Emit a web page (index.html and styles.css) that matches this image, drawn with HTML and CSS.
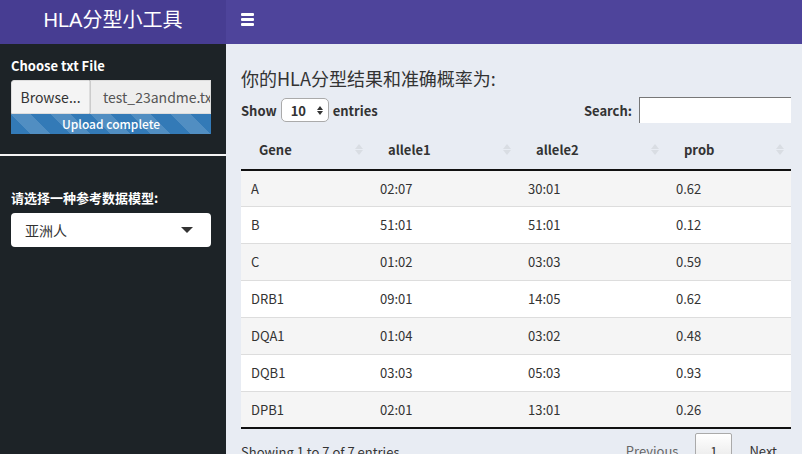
FILE: index.html
```html
<!DOCTYPE html>
<html>
<head>
<meta charset="utf-8">
<link rel="stylesheet" href="styles.css">
</head>
<body>
<div class="app">
  <header class="topbar">
    <div class="logo">HLA分型小工具</div>
    <nav class="navbar">
      <span class="burger"><i></i><i></i><i></i></span>
    </nav>
  </header>
  <div class="body">
    <aside class="sidebar">
      <div class="group">
        <label class="lbl">Choose txt File</label>
        <div class="file">
          <span class="browse">Browse...</span>
          <span class="fname">test_23andme.txt</span>
        </div>
        <div class="progress">Upload complete</div>
      </div>
      <hr class="divider">
      <div class="group group2">
        <label class="lbl">请选择一种参考数据模型:</label>
        <div class="select">
          <span>亚洲人</span>
          <span class="caret"></span>
        </div>
      </div>
    </aside>
    <main class="content">
      <h3 class="title">你的HLA分型结果和准确概率为:</h3>
      <div class="controls">
        <div class="length">Show <span class="lensel">10 <span class="spin"><b class="up"></b><b class="down"></b></span></span> entries</div>
        <div class="search">Search: <span class="sinput"></span></div>
      </div>
      <table class="tbl">
        <thead>
          <tr>
            <th class="c1">Gene<span class="sort"><b class="up"></b><b class="down"></b></span></th>
            <th class="c2">allele1<span class="sort"><b class="up"></b><b class="down"></b></span></th>
            <th class="c3">allele2<span class="sort"><b class="up"></b><b class="down"></b></span></th>
            <th class="c4">prob<span class="sort"><b class="up"></b><b class="down"></b></span></th>
          </tr>
        </thead>
        <tbody>
          <tr class="odd"><td>A</td><td>02:07</td><td>30:01</td><td>0.62</td></tr>
          <tr><td>B</td><td>51:01</td><td>51:01</td><td>0.12</td></tr>
          <tr class="odd"><td>C</td><td>01:02</td><td>03:03</td><td>0.59</td></tr>
          <tr><td>DRB1</td><td>09:01</td><td>14:05</td><td>0.62</td></tr>
          <tr class="odd"><td>DQA1</td><td>01:04</td><td>03:02</td><td>0.48</td></tr>
          <tr><td>DQB1</td><td>03:03</td><td>05:03</td><td>0.93</td></tr>
          <tr class="odd"><td>DPB1</td><td>02:01</td><td>13:01</td><td>0.26</td></tr>
        </tbody>
      </table>
      <div class="footer">
        <div class="info">Showing 1 to 7 of 7 entries</div>
        <div class="pager">
          <span class="pbtn">Previous</span>
          <span class="pbtn cur">1</span>
          <span class="pbtn">Next</span>
        </div>
      </div>
    </main>
  </div>
</div>
</body>
</html>
```

FILE: styles.css
```css
* { box-sizing: border-box; }
html, body { margin: 0; padding: 0; }
body {
  font-family: "Noto Sans CJK SC", "Lato", sans-serif;
  font-size: 14px;
  color: #333;
  width: 802px;
  height: 454px;
  overflow: hidden;
  background: #e8ecf3;
}
.app { display: flex; flex-direction: column; height: 454px; }
.topbar { display: flex; height: 44px; flex: none; }
.logo {
  width: 226px;
  background: #473d92;
  color: #fff;
  font-family: "Liberation Sans", "Noto Sans CJK SC", sans-serif;
  font-size: 20px;
  display: flex;
  align-items: center;
  justify-content: center;
  padding-bottom: 8px;
}
.navbar { flex: 1; background: #4e449b; display: flex; align-items: center; padding-left: 15px; padding-bottom: 6px; }
.burger { display: flex; flex-direction: column; gap: 2px; width: 13px; }
.burger i { display: block; height: 3px; background: #fff; border-radius: 1px; }
.body { display: flex; flex: 1; min-height: 0; }
.sidebar { width: 226px; background: #1d2327; color: #fff; flex: none; }
.group { padding: 13px 15px 0 11px; }
.lbl { display: block; font-weight: 700; font-size: 13px; line-height: 18px; margin-bottom: 5px; }
.file { display: flex; height: 34px; }
.browse {
  width: 79px; background: #f4f4f4; color: #333; border: 1px solid #ddd; border-radius: 3px 0 0 0;
  display: flex; align-items: center; justify-content: center; font-size: 14px; flex: none;
}
.fname {
  flex: 1; background: #eee; color: #555; border: 1px solid #ddd; border-left: 1px solid #ccc;
  display: flex; align-items: center; padding-left: 12px; overflow: hidden; white-space: nowrap; font-size: 14px;
}
.progress {
  height: 20px; color: #fff; font-size: 12px; line-height: 20px; text-align: center; font-weight: 500;
  background-color: #337ab7;
  background-image: linear-gradient(45deg, rgba(255,255,255,.15) 25%, transparent 25%, transparent 50%, rgba(255,255,255,.15) 50%, rgba(255,255,255,.15) 75%, transparent 75%, transparent);
  background-size: 40px 40px;
}
.divider { border: 0; border-top: 2px solid #f4f4f4; margin: 20px 0 0; }
.group2 { padding-top: 33px; }
.group2 .lbl { margin-bottom: 6px; }
.select {
  height: 34px; background: #fff; color: #333; border-radius: 4px;
  display: flex; align-items: center; justify-content: space-between; padding: 0 18px 0 14px; font-size: 14px;
}
.caret { width: 0; height: 0; border-left: 6px solid transparent; border-right: 6px solid transparent; border-top: 6px solid #333; }
.content { flex: 1; padding: 0 11px 0 15px; }
.title { font-weight: 400; font-size: 18px; margin: 22px 0 0; line-height: 24px; color: #333; }
.controls { display: flex; justify-content: space-between; align-items: center; margin-top: 7px; font-weight: 700; font-size: 13px; }
.length { display: flex; align-items: center; gap: 4px; }
.lensel {
  display: inline-flex; align-items: center; justify-content: space-between; width: 48px; height: 24px;
  border: 1px solid #aaa; border-radius: 5px; background: #fff; padding: 0 5px 0 9px; font-weight: 700; font-size: 13px;
}
.spin { display: flex; flex-direction: column; gap: 1px; }
.spin b { display: block; width: 0; height: 0; border-left: 3px solid transparent; border-right: 3px solid transparent; }
.spin .up { border-bottom: 4px solid #333; }
.spin .down { border-top: 4px solid #333; }
.search { display: flex; align-items: center; gap: 7px; }
.sinput { display: block; width: 152px; height: 26px; background: #fff; border: 1px solid #aaa; border-right: 0; border-bottom: 0; border-top-color: #777; border-left-color: #777; }
.tbl { width: 550px; border-collapse: collapse; margin-top: 6px; table-layout: fixed; }
.tbl th {
  text-align: left; font-weight: 700; font-size: 13px; height: 41px; padding: 0 10px 0 18px; position: relative;
  border-bottom: 2px solid #111; vertical-align: middle;
}
.c1 { width: 129px; } .c2 { width: 148px; } .c3 { width: 148px; } .c4 { width: 125px; }
.sort { position: absolute; right: 7px; top: 15px; display: flex; flex-direction: column; gap: 1px; }
.sort b { display: block; width: 0; height: 0; border-left: 4px solid transparent; border-right: 4px solid transparent; }
.sort .up { border-bottom: 5px solid #d9dde3; }
.sort .down { border-top: 5px solid #d9dde3; }
.tbl td { padding: 0 10px; height: 37px; border-top: 1px solid #ddd; font-size: 13px; background: #fff; }
.tbl tr:first-child td { border-top: 0; height: 36px; }
.tbl tr.odd td { background: #f5f5f5; }
.tbl tbody tr:last-child td { border-bottom: 2px solid #111; }
.footer { display: flex; justify-content: space-between; align-items: flex-start; }
.info { font-size: 13px; padding-top: 13px; }
.pager { display: flex; align-items: flex-start; margin-top: 4px; padding-right: 14px; }
.pbtn { font-size: 13px; color: #333; padding: 8px 0 0; }
.pbtn:first-child { margin-right: 17px; color: #666; }
.pbtn.cur { width: 37px; height: 30px; border: 1px solid #aaa; border-radius: 2px; background: linear-gradient(#fff, #e8e8e8); text-align: center; margin-right: 17px; }
```
